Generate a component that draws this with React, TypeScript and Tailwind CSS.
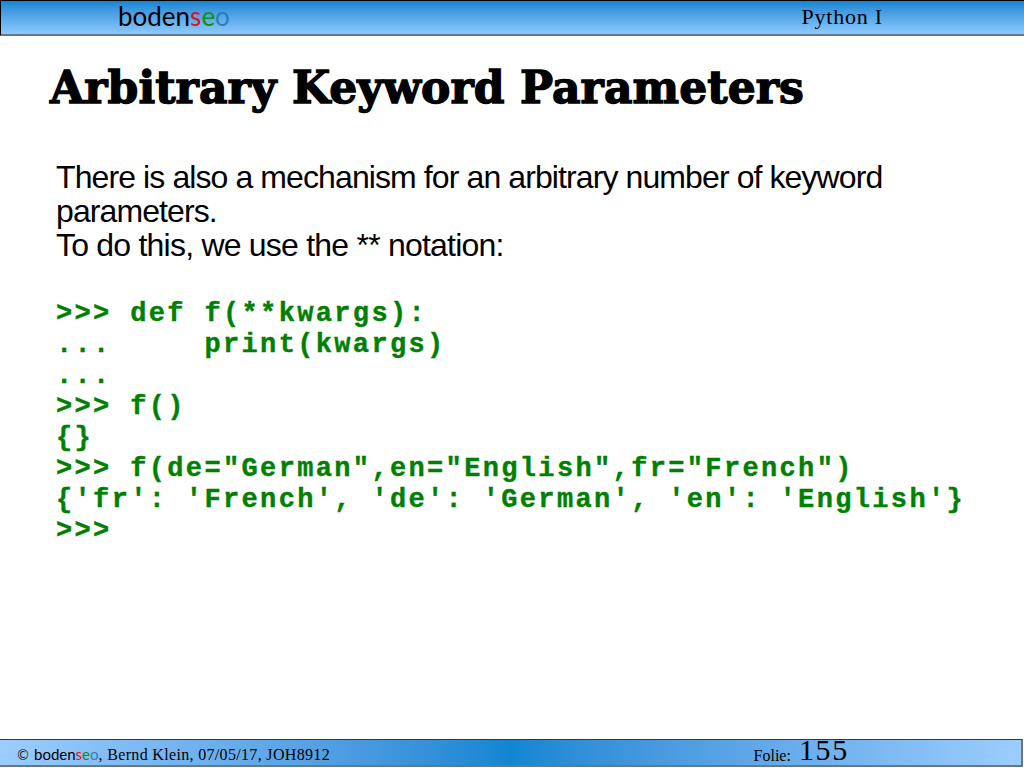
const codeLines = [
  '>>> def f(**kwargs):',
  '...     print(kwargs)',
  '...',
  '>>> f()',
  '{}',
  '>>> f(de="German",en="English",fr="French")',
  "{'fr': 'French', 'de': 'German', 'en': 'English'}",
  '>>>',
];

function Logo({ className }: { className: string }) {
  return (
    <span className={`font-['Lato',sans-serif] ${className}`}>
      <span className="text-black">boden</span>
      <span className="text-[#e0101c]">s</span>
      <span className="text-[#109010]">e</span>
      <span className="text-[#2a7fb8]">o</span>
    </span>
  );
}

export default function App() {
  return (
    <div className="w-[1024px] h-[768px] bg-white flex flex-col overflow-hidden">
      <header className="h-9 shrink-0 border-t border-l border-t-black border-l-black border-b-2 border-b-[#6b7680] bg-gradient-to-b from-[#1185d2] to-[#8ccaff] flex items-center">
        <Logo className="ml-[117px] text-[26px] leading-none font-normal -mt-1" />
        <span className="ml-auto mr-[141px] font-['Liberation_Serif',serif] text-[22px] tracking-[0.8px] text-black -mt-0.5">Python I</span>
      </header>

      <main className="flex-1 flex flex-col">
        <h1 className="mt-[22px] ml-[50px] font-['DejaVu_Serif',serif] font-bold text-[44px] tracking-[0.1px] leading-[60px] text-black [-webkit-text-stroke:1.4px_black] whitespace-nowrap">
          Arbitrary Keyword Parameters
        </h1>
        <p className="mt-[42px] ml-14 w-[900px] font-['Liberation_Sans',sans-serif] text-[32px] tracking-[-0.9px] leading-[34px] text-black">
          There is also a mechanism for an arbitrary number of keyword parameters.
          <br />
          <span className="tracking-[-0.78px]">To do this, we use the ** notation:</span>
        </p>
        <pre className="mt-[37px] ml-14 font-['Liberation_Mono',monospace] font-bold text-[27px] tracking-[2.35px] leading-[31px] text-[#008000] [-webkit-text-stroke:0.4px_#008000]">
          {codeLines.join('\n')}
        </pre>
      </main>

      <footer className="h-7 mb-px mr-px shrink-0 border-t border-t-[#2b3a48] border-b-2 border-b-[#6b7680] border-r-2 border-r-[#6b7680] bg-gradient-to-r from-[#9ccdff] via-[#1185d2] to-[#9ccdff] flex items-center">
        <span className="ml-4 mt-1 text-[14px] text-[#222] font-['DejaVu_Sans',sans-serif] leading-none">©</span>
        <Logo className="ml-1 mt-1 text-[15px] leading-none" />
        <span className="mt-1 font-['Liberation_Serif',serif] text-[16px] tracking-[0.33px] text-black">, Bernd Klein, 07/05/17, JOH8912</span>
        <span className="ml-auto font-['Liberation_Serif',serif] text-[16px] text-black mt-1.5">Folie:</span>
        <span className="ml-2 mr-[172px] font-['Liberation_Serif',serif] text-[30px] tracking-[1.7px] leading-none text-black -mt-1.5">155</span>
      </footer>
    </div>
  );
}
